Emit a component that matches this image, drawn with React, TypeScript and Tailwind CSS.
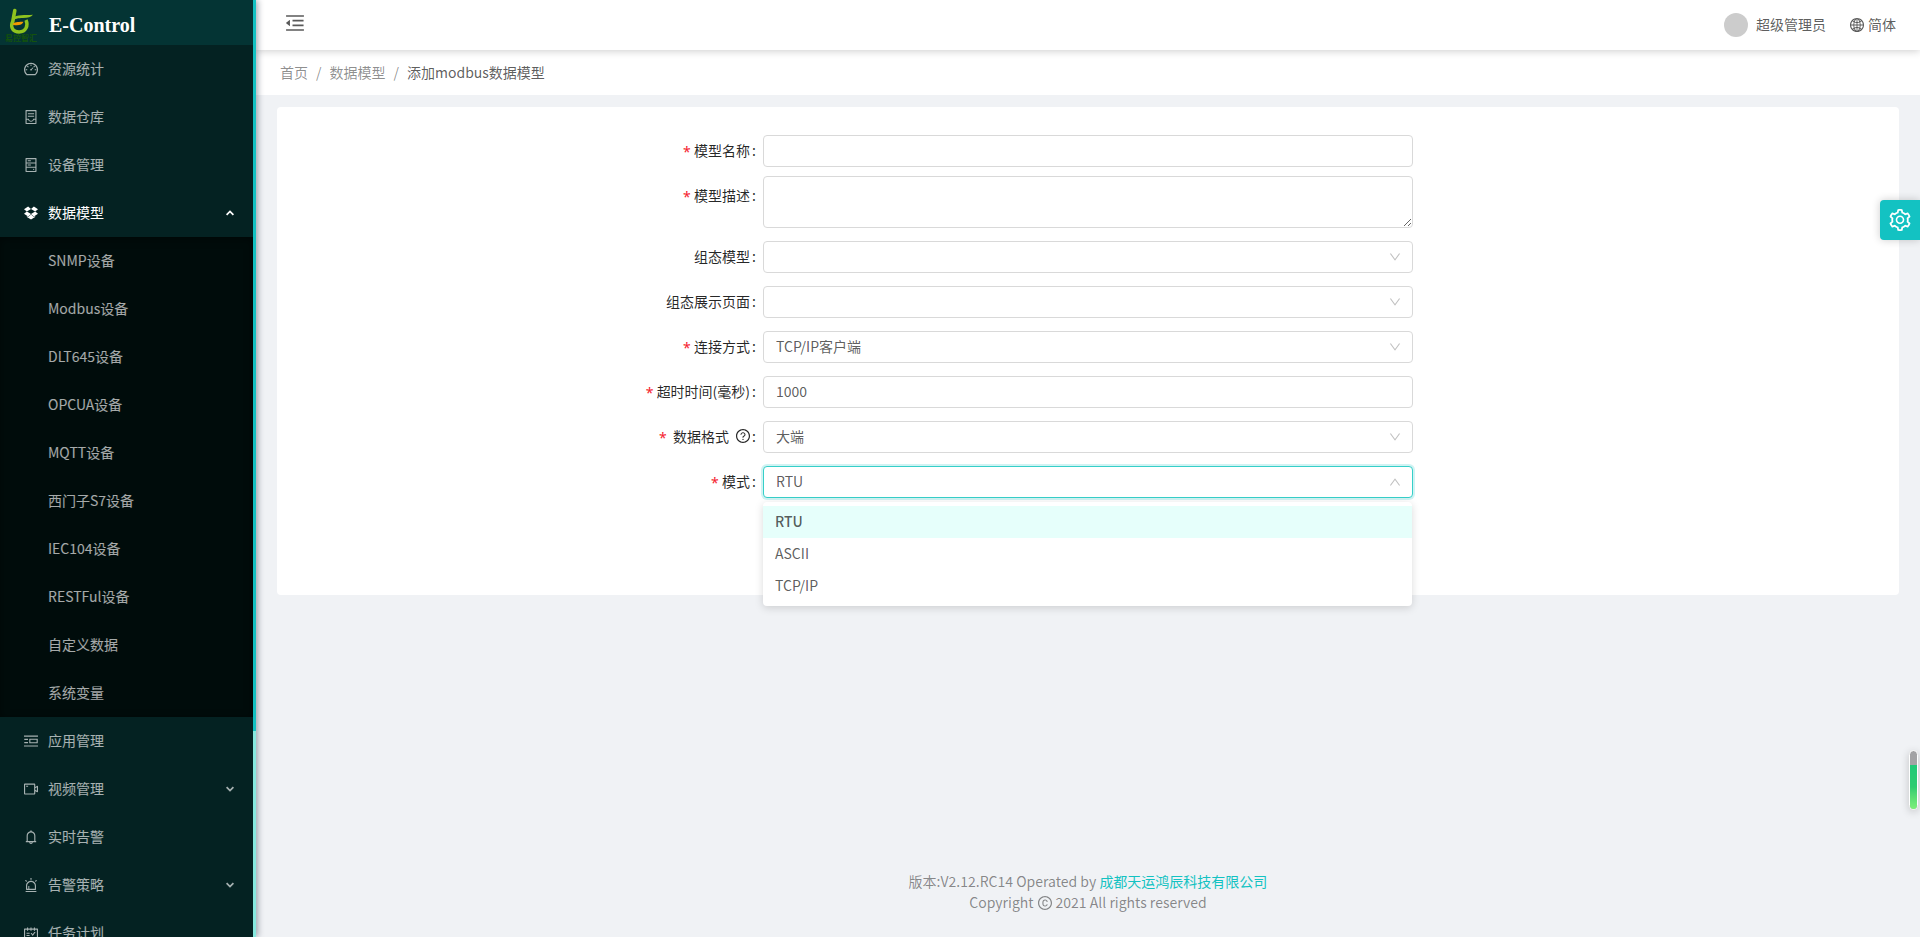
import { useState } from "react";
import type { ReactNode } from "react";
import type { IconType } from "react-icons";
import {
  AiOutlineAlert,
  AiOutlineBell,
  AiOutlineContainer,
  AiOutlineCopyright,
  AiOutlineDashboard,
  AiOutlineDown,
  AiOutlineDropbox,
  AiOutlineGlobal,
  AiOutlineHdd,
  AiOutlineMenuFold,
  AiOutlinePicRight,
  AiOutlineQuestionCircle,
  AiOutlineSchedule,
  AiOutlineSetting,
  AiOutlineUp,
  AiOutlineVideoCamera,
} from "react-icons/ai";

function Icon({ of: Glyph, size = 14 }: { of: IconType; size?: number }) {
  return <Glyph size={size} viewBox="64 64 896 896" className="shrink-0" aria-hidden />;
}

type MenuEntry = { label: string; icon: IconType; children?: string[] };

const menu: MenuEntry[] = [
  { label: "资源统计", icon: AiOutlineDashboard },
  { label: "数据仓库", icon: AiOutlineContainer },
  { label: "设备管理", icon: AiOutlineHdd },
  {
    label: "数据模型",
    icon: AiOutlineDropbox,
    children: [
      "SNMP设备",
      "Modbus设备",
      "DLT645设备",
      "OPCUA设备",
      "MQTT设备",
      "西门子S7设备",
      "IEC104设备",
      "RESTFul设备",
      "自定义数据",
      "系统变量",
    ],
  },
  { label: "应用管理", icon: AiOutlinePicRight },
  { label: "视频管理", icon: AiOutlineVideoCamera, children: [] },
  { label: "实时告警", icon: AiOutlineBell },
  { label: "告警策略", icon: AiOutlineAlert, children: [] },
  { label: "任务计划", icon: AiOutlineSchedule },
];

function Caret({ up }: { up: boolean }) {
  return (
    <svg width="8" height="6" viewBox="0 0 8 6" fill="none" stroke="currentColor" strokeWidth="1.7" aria-hidden>
      <path d={up ? "M0.6 4.9 4 1.5 7.4 4.9" : "M0.6 1.1 4 4.5 7.4 1.1"} />
    </svg>
  );
}

function Logo() {
  return (
    <svg width="32" height="34" viewBox="0 0 32 34" fill="none" aria-hidden>
      <path d="M9.800 2.500 L7.500 15" stroke="#8fc31f" strokeWidth="3.600" strokeLinecap="round" />
      <path d="M7 10 C12 6.200 20 7.200 28 6.700 C26 9 23 10 18 10 C13 10 10 10.500 7 13.500 Z" fill="#8fc31f" />
      <path d="M7.500 14 C5 20 8.500 24 14 24 C21 24 23.500 17.500 21 12" stroke="#8fc31f" strokeWidth="3.400" />
      <path d="M7.500 16 C11 13.600 14 14 18.500 13.800 C17.500 17 13 18 8.500 17 Z" fill="#f39800" />
      <text x="0" y="33" fontSize="8" fontWeight="700" fill="#14520c" fontFamily="'Noto Sans CJK SC', sans-serif">
        易控智汇
      </text>
    </svg>
  );
}

function Sidebar() {
  const [open, setOpen] = useState("数据模型");
  return (
    <aside className="relative z-20 flex w-64 shrink-0 bg-[#042222] shadow-[2px_0_6px_rgba(0,21,41,0.35)]">
      <div className="flex min-w-0 flex-1 flex-col">
        <a href="#" className="flex h-[45px] shrink-0 items-center gap-3 bg-[#043434] pl-[5px] pt-1">
          <Logo />
          <h1 className="font-[Liberation_Serif,serif] text-xl font-bold leading-7 text-white">E-Control</h1>
        </a>
        <nav className="min-h-0 flex-1 overflow-hidden">
          <ul>
            {menu.map((entry) => {
              const expanded = open === entry.label;
              return (
                <li key={entry.label}>
                  <button
                    type="button"
                    onClick={() => entry.children && setOpen(expanded ? "" : entry.label)}
                    className={`flex h-12 w-full items-center gap-[10px] pl-6 pr-[19px] text-left ${
                      expanded ? "text-white" : "text-white/65"
                    }`}
                  >
                    <Icon of={entry.icon} />
                    <span className="flex-1 pb-0.5">{entry.label}</span>
                    {entry.children && <Caret up={expanded} />}
                  </button>
                  {expanded && entry.children && (
                    <ul className="bg-[#000c0b] shadow-[inset_0_2px_8px_rgba(0,0,0,0.45)]">
                      {entry.children.map((child) => (
                        <li key={child}>
                          <a href="#" className="flex h-12 items-center pb-0.5 pl-12 text-white/65">
                            {child}
                          </a>
                        </li>
                      ))}
                    </ul>
                  )}
                </li>
              );
            })}
          </ul>
        </nav>
      </div>
      <div className="w-[3px] shrink-0 bg-[#87e8de]">
        <div className="h-[78%] bg-[#13c2c2]" />
      </div>
    </aside>
  );
}

function Field({
  id,
  label,
  required,
  hint,
  children,
}: {
  id: string;
  label: string;
  required?: boolean;
  hint?: boolean;
  children: ReactNode;
}) {
  return (
    <div className="mb-[5px] grid grid-cols-[7fr_10fr_7fr]">
      <label htmlFor={id} className="flex h-10 items-center justify-end pb-0.5 pr-[7px] text-black/85">
        {required && (
          <span className="mr-1 w-[7px] pt-1 text-center font-[Noto_Sans,sans-serif] leading-none text-[#f5222d]">
            *
          </span>
        )}
        <span className={hint ? "ml-[3px] mr-[7px]" : ""}>{label}</span>
        {hint && <Icon of={AiOutlineQuestionCircle} />}
        <span className="ml-0.5">:</span>
      </label>
      {children}
    </div>
  );
}

const box = "w-full rounded border bg-white px-3 text-black/65 outline-none";

function TextField({ id, value }: { id: string; value?: string }) {
  return <input id={id} type="text" defaultValue={value} className={`${box} my-1 h-8 border-[#d9d9d9] pb-0.5`} />;
}

function SelectField({ id, value = "", open }: { id: string; value?: string; open?: boolean }) {
  return (
    <div className="relative my-1 h-8">
      <select
        id={id}
        defaultValue={value}
        className={`${box} h-8 appearance-none pb-0.5 ${
          open ? "border-[#36cfc9] shadow-[0_0_0_2px_rgba(19,194,194,0.2)]" : "border-[#d9d9d9]"
        }`}
      >
        <option value={value}>{value}</option>
      </select>
      <span className="pointer-events-none absolute inset-y-0 right-3 flex items-center text-black/25">
        <Icon of={open ? AiOutlineUp : AiOutlineDown} size={12} />
      </span>
      {open && (
        <ul
          role="listbox"
          className="absolute left-0 right-px top-9 z-10 rounded bg-white pb-1 pt-1 text-black/65 shadow-[0_2px_8px_rgba(0,0,0,0.15)]"
        >
          {["RTU", "ASCII", "TCP/IP"].map((option) => (
            <li
              key={option}
              role="option"
              aria-selected={option === value}
              className="px-3 pb-1.5 pt-1 leading-[22px] aria-selected:bg-[#e6fffb] aria-selected:font-medium"
            >
              {option}
            </li>
          ))}
        </ul>
      )}
    </div>
  );
}

export default function App() {
  return (
    <div className="flex h-screen overflow-hidden bg-[#f0f2f5] font-[Noto_Sans_CJK_SC,sans-serif] text-sm leading-[21px] text-black/65">
      <Sidebar />
      <div className="flex min-w-0 flex-1 flex-col">
        <header className="relative z-10 flex h-[50px] shrink-0 items-center justify-between bg-white pl-[29px] pr-6 shadow-[0_1px_8px_rgba(0,0,0,0.2)]">
          <button type="button" aria-label="收起菜单" className="pb-1">
            <Icon of={AiOutlineMenuFold} size={20} />
          </button>
          <div className="flex items-center gap-6">
            <button type="button" className="flex items-center gap-2">
              <span className="size-6 rounded-full bg-[#ccc]" />
              <span className="pb-0.5">超级管理员</span>
            </button>
            <button type="button" className="flex items-center gap-1">
              <Icon of={AiOutlineGlobal} />
              <span className="pb-0.5">简体</span>
            </button>
          </div>
        </header>
        <nav className="flex h-[45px] shrink-0 items-center gap-2 bg-white px-6 text-black/45">
          <a href="#">首页</a>
          <span>/</span>
          <a href="#">数据模型</a>
          <span>/</span>
          <span className="text-black/65">添加modbus数据模型</span>
        </nav>
        <main className="flex-1 px-[21px] pt-3">
          <form className="rounded-sm bg-white px-[31px] pb-[88px] pt-6">
            <Field id="name" label="模型名称" required>
              <TextField id="name" />
            </Field>
            <Field id="desc" label="模型描述" required>
              <textarea id="desc" className={`${box} mb-1 block h-[52px] resize-y border-[#d9d9d9] py-1`} />
            </Field>
            <Field id="scada" label="组态模型">
              <SelectField id="scada" />
            </Field>
            <Field id="page" label="组态展示页面">
              <SelectField id="page" />
            </Field>
            <Field id="link" label="连接方式" required>
              <SelectField id="link" value="TCP/IP客户端" />
            </Field>
            <Field id="timeout" label="超时时间(毫秒)" required>
              <TextField id="timeout" value="1000" />
            </Field>
            <Field id="format" label="数据格式" required hint>
              <SelectField id="format" value="大端" />
            </Field>
            <Field id="mode" label="模式" required>
              <SelectField id="mode" value="RTU" open />
            </Field>
          </form>
        </main>
        <footer className="pb-6 text-center text-black/45">
          <p>
            版本:V2.12.RC14 Operated by{" "}
            <a href="#" className="text-[#13c2c2]">
              成都天运鸿辰科技有限公司
            </a>
          </p>
          <p className="flex items-center justify-center gap-1">
            Copyright <Icon of={AiOutlineCopyright} /> 2021 All rights reserved
          </p>
        </footer>
      </div>
      <button
        type="button"
        aria-label="设置"
        className="fixed right-0 top-[200px] z-30 flex size-10 items-center justify-center rounded-l bg-[#13c2c2] text-white shadow-[0_0_8px_rgba(0,0,0,0.2)]"
      >
        <Icon of={AiOutlineSetting} size={22} />
      </button>
      <div className="fixed right-[2px] top-[750px] z-30 h-[60px] w-[9px] overflow-hidden rounded-full border border-white bg-[#a3a3a5] pt-[14px] shadow-[0_2px_8px_rgba(0,0,0,0.2)]">
        <div className="h-full bg-linear-to-b from-[#1fc977] via-[#2ecc71] to-[#7df07a]" />
      </div>
    </div>
  );
}
